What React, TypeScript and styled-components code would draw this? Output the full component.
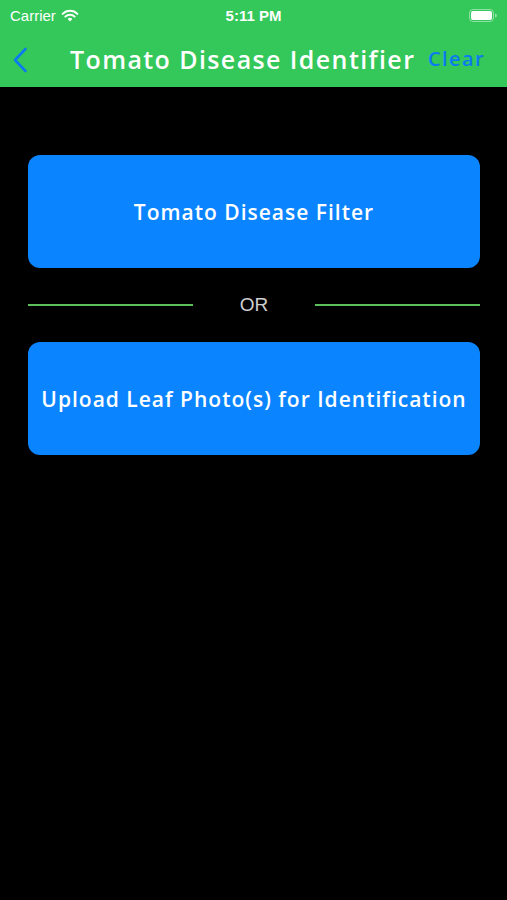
import styled, { createGlobalStyle } from "styled-components"

const Global = createGlobalStyle`
  html, body {
    margin: 0;
    padding: 0;
    background: #000;
  }
  #root {
    min-height: 900px;
    background: #000;
  }
`

export default function App() {
  return <Screen>
    <Global />
    <Header>
      <StatusBar>
        <Carrier>
          Carrier
          <svg width="18" height="13" viewBox="0 0 18 13">
            <path d="M9 12.5 L6.6 9.9 A3.4 3.4 0 0 1 11.4 9.9 Z" fill="#fff" />
            <path d="M4.3 7.6 A6.7 6.7 0 0 1 13.7 7.6" stroke="#fff" strokeWidth="2" fill="none" strokeLinecap="round" />
            <path d="M1.6 4.9 A10.5 10.5 0 0 1 16.4 4.9" stroke="#fff" strokeWidth="2" fill="none" strokeLinecap="round" />
          </svg>
        </Carrier>
        <Time>5:11 PM</Time>
        <Battery>
          <svg width="28" height="13" viewBox="0 0 28 13">
            <rect x="0.5" y="0.5" width="24" height="12" rx="3.5" fill="none" stroke="rgba(255,255,255,0.45)" />
            <rect x="2" y="2" width="21" height="9" rx="2" fill="#fff" />
            <path d="M26 4.5 v4 a1.8 1.8 0 0 0 0-4z" fill="rgba(255,255,255,0.45)" />
          </svg>
        </Battery>
      </StatusBar>
      <NavBar>
        <Back>
          <svg width="16" height="26" viewBox="0 0 16 26">
            <path d="M13.5 2 L3 13 L13.5 24" stroke="#0a7bf0" strokeWidth="2.6" fill="none" strokeLinecap="round" strokeLinejoin="round" />
          </svg>
        </Back>
        <Title>Tomato Disease Identifier</Title>
        <Clear>Clear</Clear>
      </NavBar>
    </Header>
    <Content>
      <BigButton>Tomato Disease Filter</BigButton>
      <Divider>
        <Line />
        <Or>OR</Or>
        <Line />
      </Divider>
      <BigButton>Upload Leaf Photo(s) for Identification</BigButton>
    </Content>
  </Screen>
}

const Screen = styled.div`
  width: 507px;
  min-height: 900px;
  background: #000;
  font-family: "Open Sans", Lato, sans-serif;
`

const Header = styled.div`
  background: #34c759;
  height: 87px;
  display: flex;
  flex-direction: column;
`

const StatusBar = styled.div`
  height: 30px;
  display: grid;
  grid-template-columns: 1fr auto 1fr;
  align-items: center;
  padding: 0 10px;
  color: #fff;
  font-family: "Liberation Sans", Arial, sans-serif;
`

const Carrier = styled.div`
  display: flex;
  align-items: center;
  gap: 5px;
  font-size: 15px;
`

const Time = styled.div`
  font-size: 15px;
  font-weight: 700;
`

const Battery = styled.div`
  justify-self: end;
  display: flex;
`

const NavBar = styled.div`
  flex: 1;
  display: flex;
  align-items: center;
  padding: 0 22px 0 12px;
`

const Back = styled.div`
  width: 58px;
  display: flex;
  align-items: center;
  padding-top: 2px;
`

const Title = styled.div`
  flex: 1;
  color: #fff;
  font-size: 25px;
  font-weight: 600;
  letter-spacing: 1.4px;
  white-space: nowrap;
`

const Clear = styled.div`
  color: #0a7bf0;
  font-size: 20px;
  font-weight: 600;
  letter-spacing: 1.4px;
`

const Content = styled.div`
  padding: 68px 27px 0 28px;
  display: flex;
  flex-direction: column;
`

const BigButton = styled.div`
  height: 113px;
  border-radius: 12px;
  background: #0a84ff;
  color: #fff;
  display: flex;
  align-items: center;
  justify-content: center;
  font-size: 21px;
  font-weight: 600;
  letter-spacing: 1px;
  white-space: nowrap;
`

const Divider = styled.div`
  height: 74px;
  display: flex;
  align-items: center;
`

const Line = styled.div`
  flex: 1;
  height: 1.5px;
  background: #5cbf5c;
`

const Or = styled.div`
  width: 122px;
  text-align: center;
  color: #cfcfcf;
  font-size: 19px;
  font-family: "Liberation Sans", Arial, sans-serif;
`
